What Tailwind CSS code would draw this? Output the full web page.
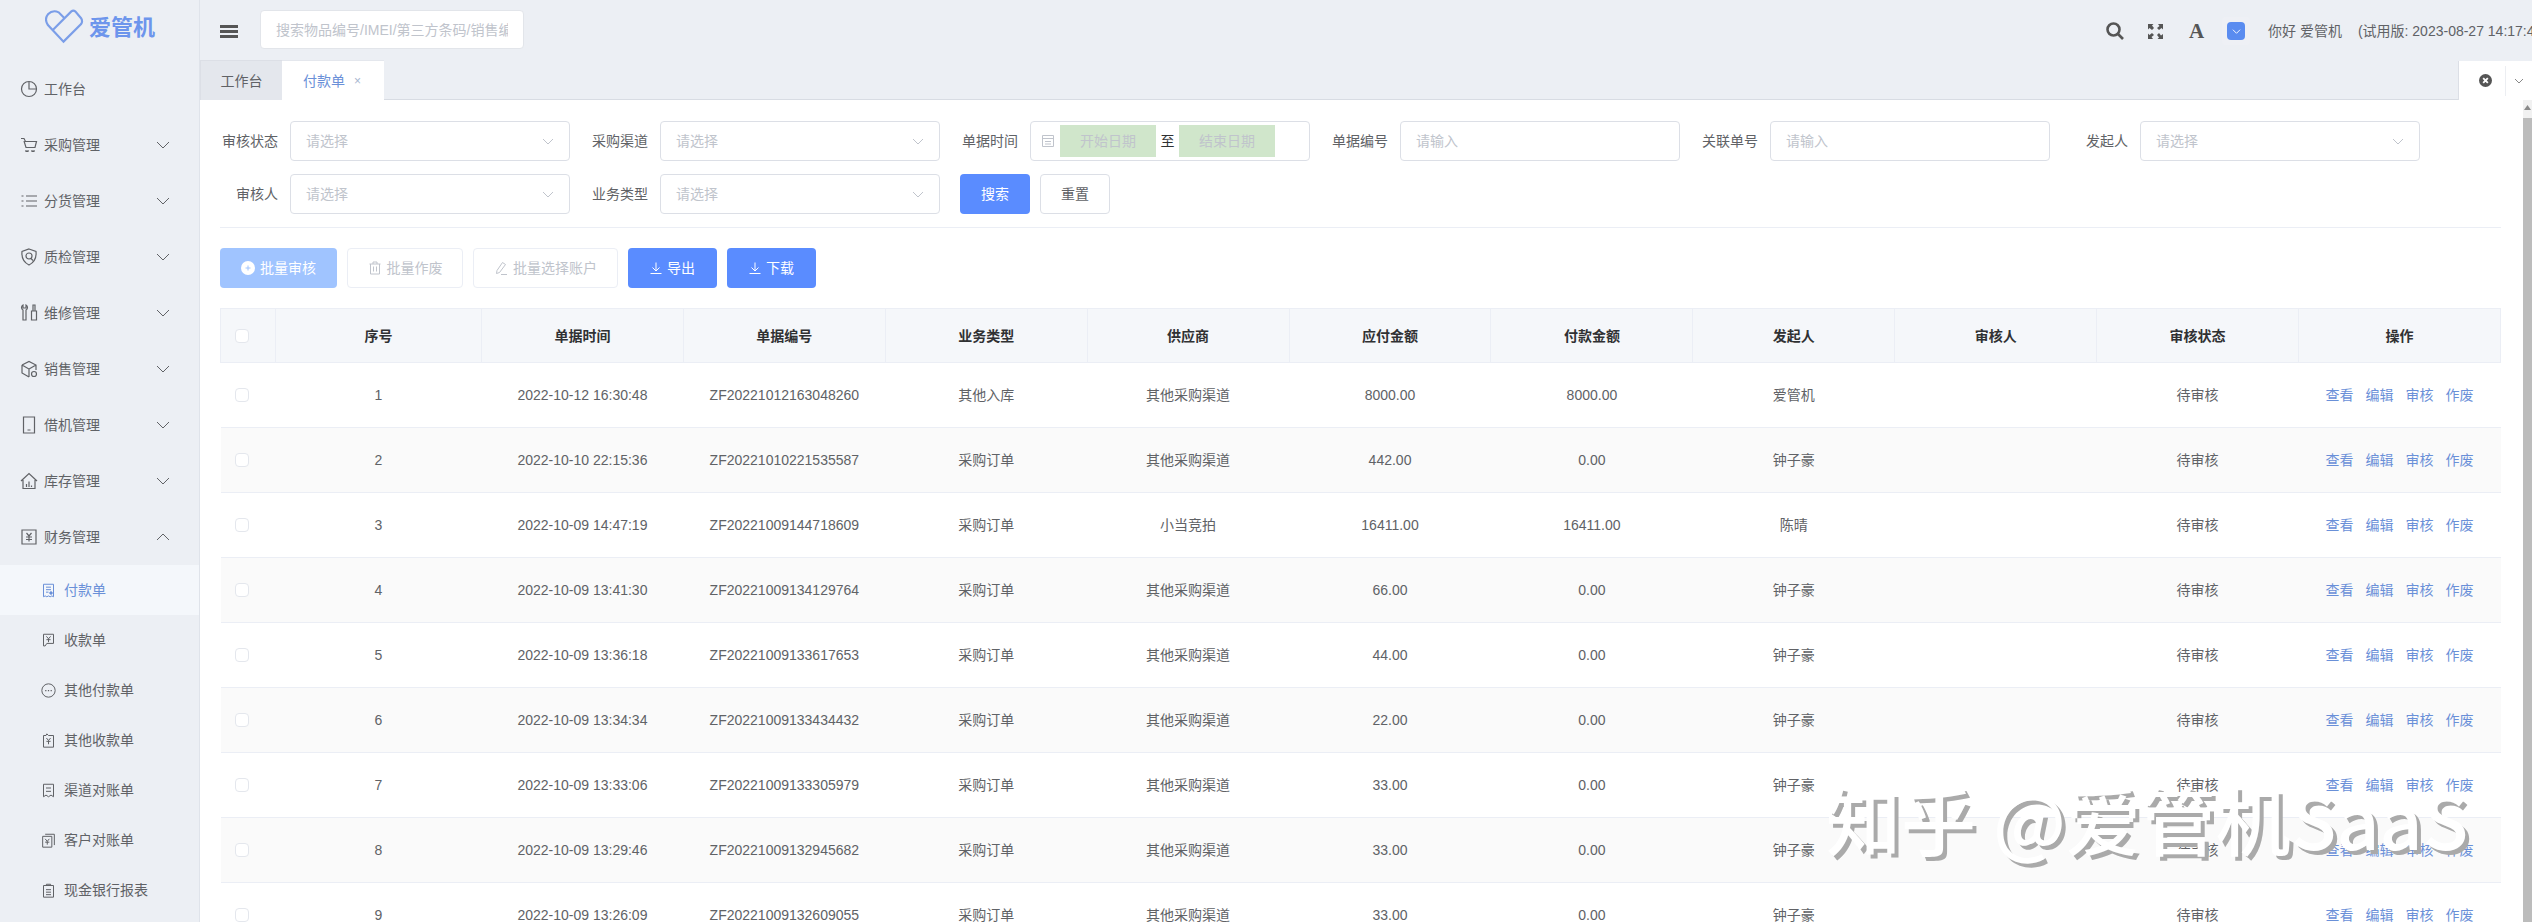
<!DOCTYPE html>
<html lang="zh">

<head>
    <meta charset="UTF-8">
    <script src="https://cdn.jsdelivr.net/npm/@tailwindcss/browser@4"></script>
    <title>付款单</title>
</head>

<body class="w-[2532px] h-[922px] overflow-hidden bg-[#eceff4] text-sm text-[#606266] font-['Liberation_Sans','Noto_Sans_CJK_SC',sans-serif]">
    <div class="flex h-full">
        <!-- sidebar -->
        <aside class="w-[200px] shrink-0 border-r border-[#dfe3ea] overflow-hidden">
            <div class="h-[61px] flex items-center pl-[45px] gap-[5px] text-[#6d95ec] text-[22px] font-bold">
                <svg class="w-[39px] h-[35px] mt-[-8px]" viewBox="0 0 40 35" fill="none" stroke="#7b9ee8" stroke-width="2.2">
                    <path d="M8 21L27 2Q29 .5 31 2L37 9Q39 12 37 15L19 33L3 16Q-1 10 3 5Q8 0 14 3L20 9" />
                </svg>
                <span class="mt-[-6px]">爱管机</span>
            </div>
            <nav id="menu"></nav>
        </aside>

        <main class="relative flex-1 min-w-0 flex flex-col overflow-hidden">
            <!-- top bar -->
            <header class="h-[60px] shrink-0 flex items-start">
                <div class="ml-5 mt-[25px] w-[18px] shrink-0 flex flex-col gap-[2px]">
                    <i class="block h-[3px] bg-[#555]"></i>
                    <i class="block h-[3px] bg-[#555]"></i>
                    <i class="block h-[3px] bg-[#555]"></i>
                </div>
                <input type="text" placeholder="搜索物品编号/IMEI/第三方条码/销售编号" class="ml-[22px] mt-[10px] w-[264px] h-[39px] shrink-0 px-[15px] bg-white border border-[#e2e5ea] rounded text-sm placeholder:text-[#c0c4cc]">
                <div class="ml-[1582px] mt-[21px] shrink-0 flex items-center whitespace-nowrap">
                    <svg class="w-[18px] h-[18px]" viewBox="0 0 18 18" fill="none" stroke="#555" stroke-width="2.6">
                        <circle cx="7.5" cy="7.5" r="6" />
                        <path d="M12 12l5 5" />
                    </svg>
                    <svg class="ml-[24px] w-[15px] h-[15px]" viewBox="0 0 15 15" fill="#555">
                        <path d="M0 0h5.5L4 1.500 6 4 4 6 1.500 4 0 5.500zM15 0v5.500L13.500 4 11 6 9 4l2.500-2L10 0zM0 15V9.500L1.500 11 4 9l2 2-2.500 2L5 15zM15 15H9.500L11 13.500 9 11l2-2 2 2.500L15 10z" />
                    </svg>
                    <span class="ml-[26px] w-[16px] font-['Liberation_Serif'] font-bold text-[21px] leading-[18px] text-[#555]">A</span>
                    <span class="ml-[17px] w-[28px] h-[28px] my-[-5px] flex items-center justify-center bg-[#eef0f5] rounded-sm">
                        <span class="w-[18px] h-[18px] rounded-sm bg-[#5a8cf0] flex items-center justify-center">
                            <svg class="w-[9px] h-[9px]" viewBox="0 0 10 10" fill="none" stroke="#fff"><path d="M1 3l4 4 4-4" /></svg>
                        </span>
                    </span>
                    <span class="ml-[18px]">你好 爱管机</span>
                    <span class="ml-4">(试用版: 2023-08-27 14:17:47)</span>
                </div>
            </header>

            <!-- tabs -->
            <div class="h-10 shrink-0 flex border-b border-[#d8dce3]">
                <div class="w-[82px] h-10 flex items-center justify-center bg-[#e4e7ed] border-t border-l border-[#dcdfe6] text-[#606266]">工作台</div>
                <div class="w-[102px] h-10 flex items-center pl-[21px] bg-white border-t border-[#e4e7ed] text-[#6a90d8]">付款单<span class="ml-[9px] text-xs text-[#a9b6d0]">×</span></div>
            </div>
            <div class="absolute right-0 top-[61px] w-[74px] h-[39px] flex items-center bg-white border-l border-[#dcdfe6]">
                <svg class="ml-5 w-[13px] h-[13px]" viewBox="0 0 14 14">
                    <circle cx="7" cy="7" r="7" fill="#555" />
                    <path d="M4.500 4.500l5 5M9.500 4.500l-5 5" stroke="#fff" stroke-width="2" />
                </svg>
                <span class="ml-[13px] h-[30px] border-l border-[#eceef2]"></span>
                <svg class="ml-2 w-[10px] h-[10px]" viewBox="0 0 10 10" fill="none" stroke="#888"><path d="M1 3l4 4 4-4" /></svg>
            </div>

            <!-- page -->
            <section class="flex-1 min-h-0 bg-white flex overflow-hidden">
                <div class="flex-1 min-w-0">
                    <form class="pt-[21px] pb-[13px] grid grid-cols-[repeat(6,370px)] gap-y-[13px]">
                        <div class="flex items-center">
                            <label class="w-[78px] mr-3 text-right">审核状态</label>
                            <div class="w-[280px] h-10 px-[15px] flex items-center justify-between border border-[#dcdfe6] rounded text-[#c0c4cc]">请选择<svg class="w-3 h-3" viewBox="0 0 12 12" fill="none" stroke="#c0c4cc"><path d="M1 4l5 5 5-5" /></svg></div>
                        </div>
                        <div class="flex items-center">
                            <label class="w-[78px] mr-3 text-right">采购渠道</label>
                            <div class="w-[280px] h-10 px-[15px] flex items-center justify-between border border-[#dcdfe6] rounded text-[#c0c4cc]">请选择<svg class="w-3 h-3" viewBox="0 0 12 12" fill="none" stroke="#c0c4cc"><path d="M1 4l5 5 5-5" /></svg></div>
                        </div>
                        <div class="flex items-center">
                            <label class="w-[78px] mr-3 text-right">单据时间</label>
                            <div class="w-[280px] h-10 pl-[10px] flex items-center border border-[#dcdfe6] rounded text-[#c0c4cc]">
                                <svg class="w-[14px] h-[14px]" viewBox="0 0 14 14" fill="none" stroke="#c0c4cc"><path d="M1.500 1.500h11v11h-11zM1.500 4.500h11M4 7.500h6M4 10h6" /></svg>
                                <span class="ml-[5px] w-24 h-8 flex items-center justify-center bg-[#d0e6cb]">开始日期</span>
                                <span class="w-[23px] text-center text-[#303133]">至</span>
                                <span class="w-24 h-8 flex items-center justify-center bg-[#d0e6cb]">结束日期</span>
                            </div>
                        </div>
                        <div class="flex items-center">
                            <label class="w-[78px] mr-3 text-right">单据编号</label>
                            <input type="text" placeholder="请输入" class="w-[280px] h-10 px-[15px] border border-[#dcdfe6] rounded text-sm placeholder:text-[#c0c4cc]">
                        </div>
                        <div class="flex items-center">
                            <label class="w-[78px] mr-3 text-right">关联单号</label>
                            <input type="text" placeholder="请输入" class="w-[280px] h-10 px-[15px] border border-[#dcdfe6] rounded text-sm placeholder:text-[#c0c4cc]">
                        </div>
                        <div class="flex items-center">
                            <label class="w-[78px] mr-3 text-right">发起人</label>
                            <div class="w-[280px] h-10 px-[15px] flex items-center justify-between border border-[#dcdfe6] rounded text-[#c0c4cc]">请选择<svg class="w-3 h-3" viewBox="0 0 12 12" fill="none" stroke="#c0c4cc"><path d="M1 4l5 5 5-5" /></svg></div>
                        </div>
                        <div class="flex items-center">
                            <label class="w-[78px] mr-3 text-right">审核人</label>
                            <div class="w-[280px] h-10 px-[15px] flex items-center justify-between border border-[#dcdfe6] rounded text-[#c0c4cc]">请选择<svg class="w-3 h-3" viewBox="0 0 12 12" fill="none" stroke="#c0c4cc"><path d="M1 4l5 5 5-5" /></svg></div>
                        </div>
                        <div class="flex items-center">
                            <label class="w-[78px] mr-3 text-right">业务类型</label>
                            <div class="w-[280px] h-10 px-[15px] flex items-center justify-between border border-[#dcdfe6] rounded text-[#c0c4cc]">请选择<svg class="w-3 h-3" viewBox="0 0 12 12" fill="none" stroke="#c0c4cc"><path d="M1 4l5 5 5-5" /></svg></div>
                        </div>
                        <div class="flex items-center pl-5 gap-[10px]">
                            <button type="button" class="w-[70px] h-10 bg-[#5a8cff] text-white rounded">搜索</button>
                            <button type="button" class="w-[70px] h-10 bg-white border border-[#dcdfe6] text-[#606266] rounded">重置</button>
                        </div>
                    </form>

                    <div class="ml-5 w-[2281px]">
                        <div class="border-t border-[#ebeef5]"></div>

                        <div class="mt-5 flex gap-[10px]">
                            <button type="button" class="w-[117px] h-10 flex items-center justify-center gap-[5px] bg-[#a0c4ff] text-white rounded">
                                <svg class="w-[14px] h-[14px]" viewBox="0 0 14 14"><circle cx="7" cy="7" r="7" fill="#fff" /><path d="M4.500 7h5M7 4.500v5" stroke="#a0c4ff" /></svg>批量审核
                            </button>
                            <button type="button" class="w-[116px] h-10 flex items-center justify-center gap-[5px] border border-[#ebeef5] text-[#c0c4cc] rounded">
                                <svg class="w-[14px] h-[14px]" viewBox="0 0 14 14" fill="none" stroke="#c0c4cc"><path d="M1.500 3h11M5 3V1h4v2M2.500 3v10h9V3M5.500 5.500v5M8.500 5.500v5" /></svg>批量作废
                            </button>
                            <button type="button" class="w-[145px] h-10 flex items-center justify-center gap-[5px] border border-[#ebeef5] text-[#c0c4cc] rounded">
                                <svg class="w-[14px] h-[14px]" viewBox="0 0 14 14" fill="none" stroke="#c0c4cc"><path d="M8.500 1.500l3 2-6 8-3 1 .5-3zM7 13.500h6" /></svg>批量选择账户
                            </button>
                            <button type="button" class="w-[89px] h-10 flex items-center justify-center gap-[5px] bg-[#5a8cff] text-white rounded">
                                <svg class="w-3 h-3" viewBox="0 0 12 12" fill="none" stroke="#fff"><path d="M6 .5v8M2.500 5.500L6 9l3.500-3.500M.5 11.500h11" /></svg>导出
                            </button>
                            <button type="button" class="w-[89px] h-10 flex items-center justify-center gap-[5px] bg-[#5a8cff] text-white rounded">
                                <svg class="w-3 h-3" viewBox="0 0 12 12" fill="none" stroke="#fff"><path d="M6 .5v8M2.500 5.500L6 9l3.500-3.500M.5 11.500h11" /></svg>下载
                            </button>
                        </div>

                        <table class="mt-5 w-full table-fixed border-collapse text-center">
                            <thead>
                                <tr class="h-[54px] bg-[#f5f7fa] text-[#303133] font-bold">
                                    <th class="w-[55px] border border-[#ebeef5]"><span class="block ml-[14px] w-[14px] h-[14px] bg-white border border-[#e4e7ed] rounded-sm"></span></th>
                                    <th class="w-[206px] border border-[#ebeef5]">序号</th>
                                    <th class="border border-[#ebeef5]">单据时间</th>
                                    <th class="border border-[#ebeef5]">单据编号</th>
                                    <th class="border border-[#ebeef5]">业务类型</th>
                                    <th class="border border-[#ebeef5]">供应商</th>
                                    <th class="border border-[#ebeef5]">应付金额</th>
                                    <th class="border border-[#ebeef5]">付款金额</th>
                                    <th class="border border-[#ebeef5]">发起人</th>
                                    <th class="border border-[#ebeef5]">审核人</th>
                                    <th class="border border-[#ebeef5]">审核状态</th>
                                    <th class="border border-[#ebeef5]">操作</th>
                                </tr>
                            </thead>
                            <tbody id="rows"></tbody>
                        </table>
                    </div>
                </div>

                <!-- scrollbar -->
                <div class="w-[9px] shrink-0 flex flex-col items-center bg-[#f1f1f1]">
                    <svg class="mt-[5px] w-[7px] h-[5px]" viewBox="0 0 7 5" fill="#8a8a8a"><path d="M3.500 0L7 5H0z" /></svg>
                    <div class="mt-2 flex-1 w-full bg-[#bcbcbc]"></div>
                </div>
            </section>

            <!-- 知乎 watermark -->
            <div class="absolute left-[1626px] top-[770px] text-[75px] leading-[96px] font-medium whitespace-nowrap text-white font-['Noto_Sans_CJK_SC',sans-serif] [text-shadow:4px_4px_0_#aaa]">知乎 @爱管机SaaS</div>
        </main>
    </div>

    <script>
        const stroke = 'fill="none" stroke="currentColor" stroke-width="1.2"';
        const icons = {
            clock: `<circle cx="9" cy="9" r="7.500"/><path d="M9 2v7h7"/>`,
            cart: `<path d="M1 2.500h3l1.500 3h11l-1.500 6h-9L4 5M6 14v1.500h2V14M12 14v1.500h2V14"/>`,
            list: `<path d="M6 4h11M6 9h11M6 14h11M1.500 4h2M1.500 9h2M1.500 14h2"/>`,
            shield: `<path d="M9 1l7 2.500c.5 5-1 10.500-7 13.500C3 14 1.500 8.500 2 3.500z"/><circle cx="9" cy="8" r="3"/><path d="M11 10.500l2 2"/>`,
            tool: `<path d="M3 1v3h3V1c2 1 2 4 0 5v10H3V6C1 5 1 2 3 1zM13 1h2v6h-2zM11.500 7h5v9h-5z"/>`,
            box: `<path d="M2 5l7-3.500L16 5v5M2 5v8l7 4M2 5l7 4v8M9 9l7-4"/><circle cx="14" cy="14" r="2.500"/>`,
            phone: `<path d="M3.500 1h11v16h-11zM7.500 14h3"/>`,
            house: `<path d="M1 9l8-7.500L17 9M3 8v8.500h12V8M6.500 15v-3M9 15V9.500M11.500 15v-1.500"/>`,
            yuan: `<path d="M2 2h14v14H2zM6.500 5L9 8l2.500-3M6 9h6M6 11.500h6M9 8v5.500"/>`,
            pay: `<path d="M3 1.500h12v15l-2-1-2 1-2-1-2 1-2-1-2 1zM6 5h6M6 8h6M6 11h3"/><circle cx="12" cy="12" r="1.500" fill="currentColor"/>`,
            receipt: `<path d="M3 1.500h12v11H7l-2 3H3zM6.500 4L9 7l2.500-3M6.500 8h5M9 7v4"/>`,
            more: `<circle cx="9" cy="9" r="8"/><path d="M5 9h1.500M8.250 9h1.500M11.500 9h1.500" stroke-width="1.500"/>`,
            other: `<path d="M3 3h3l1-2 2 2h6v14H3zM6.500 6L9 9l2.500-3M6.500 10h5M9 9v4.500"/>`,
            bill: `<path d="M3 1.500h12v15l-3-2-3 2-3-2-3 2zM6 6h6M6 10h6"/>`,
            customer: `<path d="M5 1.500h11v13M2 4h11v13H2zM5 7l2.500 3L10 7M5 11h5M7.500 10v4"/>`,
            note: `<path d="M3 3h12v14H3zM6.500 3V1.500h5V3M6 8h6M6 11h6M6 14h6"/>`
        };

        function icon(name, size) {
            return `<svg class="${size} shrink-0" viewBox="0 0 18 18" ${stroke}>${icons[name]}</svg>`;
        }

        const chevronDown = `<svg class="ml-auto mr-[30px] w-3 h-3" viewBox="0 0 12 12" fill="none" stroke="#606266"><path d="M0 3l6 6 6-6"/></svg>`;
        const chevronUp = `<svg class="ml-auto mr-[30px] w-3 h-3" viewBox="0 0 12 12" fill="none" stroke="#606266"><path d="M0 9l6-6 6 6"/></svg>`;

        const groups = [
            ['clock', '工作台', ''],
            ['cart', '采购管理', chevronDown],
            ['list', '分货管理', chevronDown],
            ['shield', '质检管理', chevronDown],
            ['tool', '维修管理', chevronDown],
            ['box', '销售管理', chevronDown],
            ['phone', '借机管理', chevronDown],
            ['house', '库存管理', chevronDown],
            ['yuan', '财务管理', chevronUp]
        ];
        const subItems = [
            ['pay', '付款单'],
            ['receipt', '收款单'],
            ['more', '其他付款单'],
            ['other', '其他收款单'],
            ['bill', '渠道对账单'],
            ['customer', '客户对账单'],
            ['note', '现金银行报表']
        ];

        document.getElementById('menu').innerHTML = groups.map(g => `
            <div class="h-14 flex items-center pl-5 gap-[6px]">${icon(g[0], 'w-[18px] h-[18px]')}<span>${g[1]}</span>${g[2]}</div>`).join('')
            + subItems.map((s, i) => `
            <div class="h-[50px] flex items-center pl-[41px] gap-2 ${i === 0 ? 'bg-[#f4f7fb] text-[#6a90d8]' : ''}">${icon(s[0], 'w-[15px] h-[15px]')}<span>${s[1]}</span></div>`).join('');

        const data = [
            ['2022-10-12 16:30:48', 'ZF20221012163048260', '其他入库', '其他采购渠道', '8000.00', '8000.00', '爱管机'],
            ['2022-10-10 22:15:36', 'ZF20221010221535587', '采购订单', '其他采购渠道', '442.00', '0.00', '钟子豪'],
            ['2022-10-09 14:47:19', 'ZF20221009144718609', '采购订单', '小当竞拍', '16411.00', '16411.00', '陈晴'],
            ['2022-10-09 13:41:30', 'ZF20221009134129764', '采购订单', '其他采购渠道', '66.00', '0.00', '钟子豪'],
            ['2022-10-09 13:36:18', 'ZF20221009133617653', '采购订单', '其他采购渠道', '44.00', '0.00', '钟子豪'],
            ['2022-10-09 13:34:34', 'ZF20221009133434432', '采购订单', '其他采购渠道', '22.00', '0.00', '钟子豪'],
            ['2022-10-09 13:33:06', 'ZF20221009133305979', '采购订单', '其他采购渠道', '33.00', '0.00', '钟子豪'],
            ['2022-10-09 13:29:46', 'ZF20221009132945682', '采购订单', '其他采购渠道', '33.00', '0.00', '钟子豪'],
            ['2022-10-09 13:26:09', 'ZF20221009132609055', '采购订单', '其他采购渠道', '33.00', '0.00', '钟子豪']
        ];

        document.getElementById('rows').innerHTML = data.map((item, index) => `
            <tr class="h-[65px] border-b border-[#ebeef5] ${index % 2 ? 'bg-[#fafafa]' : 'bg-white'}">
                <td><span class="block ml-[14px] w-[14px] h-[14px] bg-white border border-[#e4e7ed] rounded-sm"></span></td>
                <td>${index + 1}</td>
                ${item.map(v => `<td>${v}</td>`).join('')}
                <td></td>
                <td>待审核</td>
                <td class="text-[#6a90d8]"><span class="inline-flex gap-3"><a>查看</a><a>编辑</a><a>审核</a><a>作废</a></span></td>
            </tr>`).join('');
    </script>
</body>

</html>
